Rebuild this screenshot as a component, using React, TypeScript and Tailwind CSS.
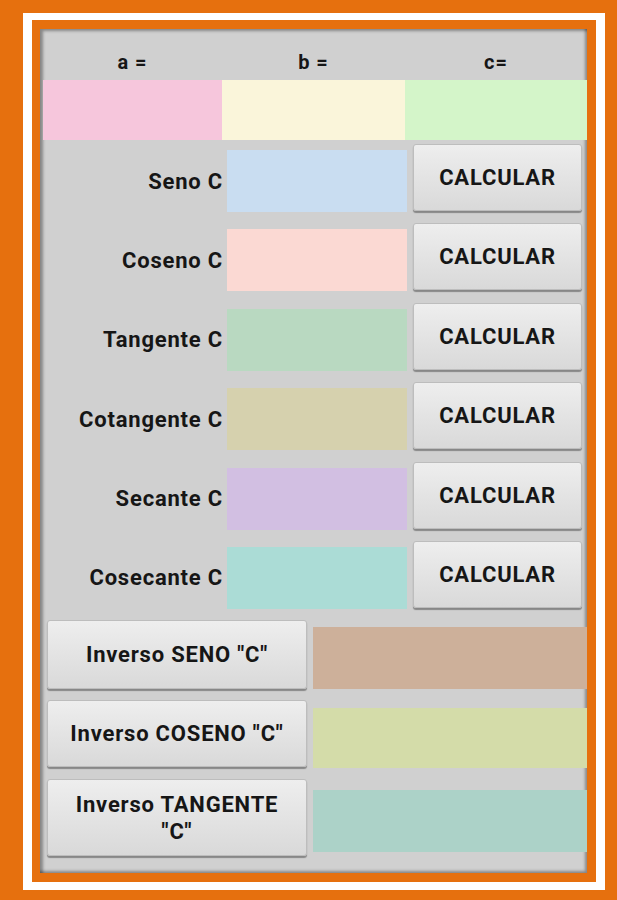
import React from 'react';

const rows = [
  { label: 'Seno C', color: 'bg-[#c9ddf1]' },
  { label: 'Coseno C', color: 'bg-[#fbd9d3]' },
  { label: 'Tangente C', color: 'bg-[#b9d9c1]' },
  { label: 'Cotangente C', color: 'bg-[#d6d1ae]' },
  { label: 'Secante C', color: 'bg-[#d2bfe2]' },
  { label: 'Cosecante C', color: 'bg-[#abdcd6]' },
];

const btn =
  'rounded-[3px] border border-[#bdbdbd] bg-gradient-to-b from-[#eeeeee] to-[#d9d9d9] shadow-[0_2px_1px_rgba(0,0,0,0.35)] text-[#161616] font-bold text-[22px] tracking-[0.8px] leading-[27px] flex items-center justify-center text-center';

export default function App() {
  return (
    <div className="w-[617px] h-[900px] bg-[#e6700e] pl-[23px] pt-[13px] pr-[12px] pb-[10px] font-['Roboto',sans-serif]">
      <div className="h-full bg-white pl-[9px] pt-[7px] pr-[9px] pb-[8px]">
        <div className="h-full bg-[#e6700e] pl-[8px] pt-[9px] pr-[9px] pb-[9px]">
          <div className="h-full bg-[#d0d0d0] pl-[3px] shadow-[inset_3px_2px_3px_rgba(0,0,0,0.35),inset_-2px_-2px_3px_rgba(0,0,0,0.35)]">
            {/* header */}
            <div className="h-[51px] flex items-center pt-[14px] text-[20px] tracking-[1px] font-bold text-[#161616]">
              <div className="w-[179px] text-center">a =</div>
              <div className="w-[183px] text-center">b =</div>
              <div className="flex-1 text-center">c=</div>
            </div>
            <div className="h-[60px] flex">
              <div className="w-[179px] bg-[#f6c6dc]" />
              <div className="w-[183px] bg-[#faf5da]" />
              <div className="flex-1 bg-[#d4f5c9]" />
            </div>

            {/* trig rows */}
            <div className="pt-[4px]">
              {rows.map((r) => (
                <div key={r.label} className="h-[79.4px] flex items-start">
                  <div className="w-[184px] h-[68px] pt-[6px] flex items-center justify-end pr-[4px] text-[22px] tracking-[0.8px] font-bold text-[#161616]">
                    {r.label}
                  </div>
                  <div className={`w-[180px] h-[62px] mt-[6px] ${r.color}`} />
                  <button className={`${btn} ml-[6px] w-[169px] h-[67px]`}>CALCULAR</button>
                </div>
              ))}
            </div>

            {/* inverse rows */}
            <div className="flex flex-col">
              <div className="h-[80px] flex items-start">
                <button className={`${btn} ml-[4px] w-[260px] h-[69px]`}>Inverso SENO "C"</button>
                <div className="flex-1 ml-[6px] mt-[7px] h-[62px] bg-[#cdb09a]" />
              </div>
              <div className="h-[79px] flex items-start">
                <button className={`${btn} ml-[4px] w-[260px] h-[67px]`}>Inverso COSENO "C"</button>
                <div className="flex-1 ml-[6px] mt-[8px] h-[60px] bg-[#d4dca9]" />
              </div>
              <div className="h-[78px] flex items-start">
                <button className={`${btn} ml-[4px] w-[260px] h-[77px] px-[20px]`}>Inverso TANGENTE "C"</button>
                <div className="flex-1 ml-[6px] mt-[11px] h-[62px] bg-[#acd2c8]" />
              </div>
            </div>
          </div>
        </div>
      </div>
    </div>
  );
}
